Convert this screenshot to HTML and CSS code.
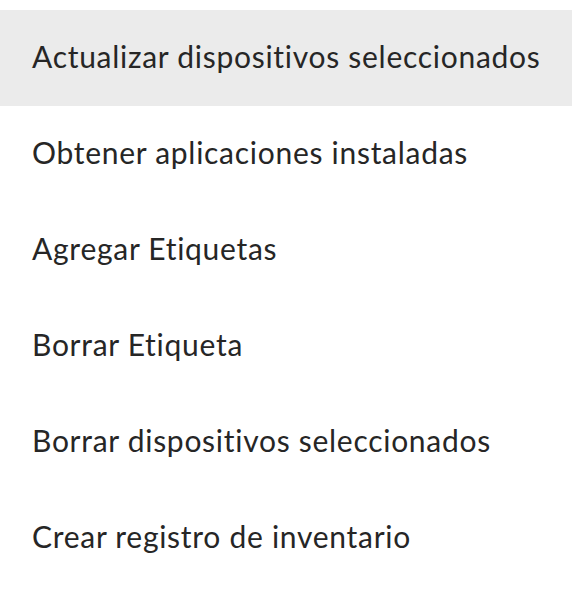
FILE: index.html
```html
<!DOCTYPE html>
<html lang="es">
<head>
<meta charset="utf-8">
<link rel="stylesheet" href="styles.css">
</head>
<body>
<ul class="menu">
  <li class="menu-item selected">Actualizar dispositivos seleccionados</li>
  <li class="menu-item">Obtener aplicaciones instaladas</li>
  <li class="menu-item">Agregar Etiquetas</li>
  <li class="menu-item">Borrar Etiqueta</li>
  <li class="menu-item">Borrar dispositivos seleccionados</li>
  <li class="menu-item">Crear registro de inventario</li>
</ul>
</body>
</html>
```
FILE: styles.css
```css
html, body {
  margin: 0;
  padding: 0;
  background: #ffffff;
}
.menu {
  list-style: none;
  margin: 0;
  padding: 10px 0 0 0;
  font-family: Lato, "Noto Sans", sans-serif;
}
.menu-item {
  height: 96px;
  display: flex;
  align-items: center;
  padding-left: 32px;
  padding-bottom: 4px;
  box-sizing: border-box;
  font-size: 30px;
  font-weight: 400;
  letter-spacing: 0.72px;
  font-variant-ligatures: none;
  color: #262626;
  white-space: nowrap;
}
.menu-item.selected {
  background: #ebebeb;
}
```
